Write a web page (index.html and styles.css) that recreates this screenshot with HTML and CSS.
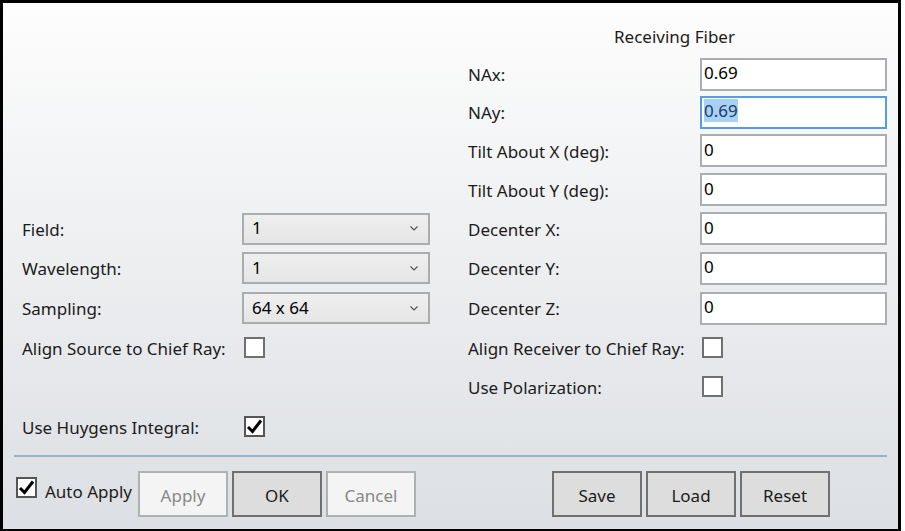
FILE: index.html
```html
<!DOCTYPE html>
<html>
<head>
<meta charset="utf-8">
<link rel="stylesheet" href="styles.css">
</head>
<body>
<div class="window">
  <div class="form">
    <!-- row 1 -->
    <div class="cell"></div><div class="cell"></div><div class="cell"></div>
    <div class="cell title span2">Receiving Fiber</div>
    <!-- row 2 -->
    <div class="cell"></div><div class="cell"></div><div class="cell"></div>
    <div class="cell label">NAx:</div>
    <div class="cell"><div class="textbox">0.69</div></div>
    <!-- row 3 -->
    <div class="cell"></div><div class="cell"></div><div class="cell"></div>
    <div class="cell label">NAy:</div>
    <div class="cell"><div class="textbox focused"><span class="sel">0.69</span></div></div>
    <!-- row 4 -->
    <div class="cell"></div><div class="cell"></div><div class="cell"></div>
    <div class="cell label">Tilt About X (deg):</div>
    <div class="cell"><div class="textbox">0</div></div>
    <!-- row 5 -->
    <div class="cell"></div><div class="cell"></div><div class="cell"></div>
    <div class="cell label">Tilt About Y (deg):</div>
    <div class="cell"><div class="textbox">0</div></div>
    <!-- row 6 -->
    <div class="cell label">Field:</div>
    <div class="cell"><div class="combo"><span>1</span><svg class="chev" width="8" height="5" viewBox="0 0 8 5"><polyline points="0.5,0.5 4,4 7.5,0.5" fill="none" stroke="#555" stroke-width="1.2"/></svg></div></div>
    <div class="cell"></div>
    <div class="cell label">Decenter X:</div>
    <div class="cell"><div class="textbox">0</div></div>
    <!-- row 7 -->
    <div class="cell label">Wavelength:</div>
    <div class="cell"><div class="combo"><span>1</span><svg class="chev" width="8" height="5" viewBox="0 0 8 5"><polyline points="0.5,0.5 4,4 7.5,0.5" fill="none" stroke="#555" stroke-width="1.2"/></svg></div></div>
    <div class="cell"></div>
    <div class="cell label">Decenter Y:</div>
    <div class="cell"><div class="textbox">0</div></div>
    <!-- row 8 -->
    <div class="cell label">Sampling:</div>
    <div class="cell"><div class="combo"><span>64 x 64</span><svg class="chev" width="8" height="5" viewBox="0 0 8 5"><polyline points="0.5,0.5 4,4 7.5,0.5" fill="none" stroke="#555" stroke-width="1.2"/></svg></div></div>
    <div class="cell"></div>
    <div class="cell label">Decenter Z:</div>
    <div class="cell"><div class="textbox">0</div></div>
    <!-- row 9 -->
    <div class="cell label">Align Source to Chief Ray:</div>
    <div class="cell"><div class="check"></div></div>
    <div class="cell"></div>
    <div class="cell label">Align Receiver to Chief Ray:</div>
    <div class="cell"><div class="check"></div></div>
    <!-- row 10 -->
    <div class="cell"></div><div class="cell"></div><div class="cell"></div>
    <div class="cell label">Use Polarization:</div>
    <div class="cell"><div class="check"></div></div>
    <!-- row 11 -->
    <div class="cell label">Use Huygens Integral:</div>
    <div class="cell"><div class="check checked"><svg width="17" height="17" viewBox="0 0 17 17"><polyline points="2,9 6.5,13.5 15,2.5" fill="none" stroke="#000" stroke-width="3"/></svg></div></div>
    <div class="cell"></div><div class="cell"></div><div class="cell"></div>
  </div>
  <div class="separator"></div>
  <div class="footer">
    <div class="group">
      <div class="auto">
        <div class="check checked"><svg width="17" height="17" viewBox="0 0 17 17"><polyline points="2,9 6.5,13.5 15,2.5" fill="none" stroke="#000" stroke-width="3"/></svg></div>
        <span class="auto-label">Auto Apply</span>
      </div>
      <div class="btn disabled">Apply</div>
      <div class="btn">OK</div>
      <div class="btn disabled">Cancel</div>
    </div>
    <div class="group right">
      <div class="btn">Save</div>
      <div class="btn">Load</div>
      <div class="btn">Reset</div>
    </div>
  </div>
</div>
</body>
</html>
```
FILE: styles.css
```css
html, body {
  margin: 0;
  padding: 0;
  background: #ffffff;
}
body {
  font-family: "Noto Sans", "Open Sans", sans-serif;
  font-size: 17px;
  color: #1b1b1b;
}
.window {
  width: 901px;
  height: 531px;
  box-sizing: border-box;
  border: 3px solid #000;
  border-bottom-width: 2px;
  background: linear-gradient(#fdfdfd, #dcdfe3);
  padding: 14px 11px 0 11px;
}
.form {
  display: grid;
  padding-left: 8px;
  grid-template-columns: 220px 188px 38px 232px 187px;
  grid-template-rows: 38px 38px 38px 39px 39px 39px 40px 40px 39px 39px 41px;
}
.cell {
  display: flex;
  align-items: center;
  min-width: 0;
}
.span2 {
  grid-column: span 2;
}
.title {
  justify-content: center;
  padding-right: 6px;
}
.label {
  white-space: nowrap;
  padding-top: 1px;
}
.textbox {
  box-sizing: border-box;
  width: 187px;
  height: 33px;
  border: 2px solid #abadb3;
  background: #fff;
  padding: 0 0 3px 2px;
  display: flex;
  align-items: center;
  color: #000;
}
.textbox.focused {
  border-color: #569de5;
}
.sel {
  background: #a8d1f8;
  color: #1d3c5e;
}
.combo {
  box-sizing: border-box;
  width: 188px;
  height: 32px;
  border: 2px solid #acacac;
  background: linear-gradient(#efefef, #e5e5e5);
  padding: 0 10px 2px 8px;
  display: flex;
  align-items: center;
  justify-content: space-between;
  color: #000;
}
.chev {
  margin-top: 2px;
}
.check {
  box-sizing: border-box;
  width: 21px;
  height: 21px;
  border: 2px solid #707070;
  background: #fff;
  margin-left: 2px;
  display: flex;
  align-items: center;
  justify-content: center;
}
.check.checked {
  border-color: #555;
}
.separator {
  height: 2px;
  background: #97b3c5;
  margin-top: 8px;
}
.footer {
  display: flex;
  justify-content: space-between;
  padding: 14px 57px 0 0;
}
.group {
  display: flex;
  gap: 4px;
}
.auto {
  display: flex;
  align-items: flex-start;
  width: 120px;
}
.auto .check {
  margin-top: 6px;
  margin-left: 2px;
}
.auto-label {
  margin-left: 8px;
  margin-top: 10px;
  line-height: 22px;
}
.btn {
  box-sizing: border-box;
  width: 90px;
  height: 46px;
  border: 2px solid #707070;
  background: #dddddd;
  display: flex;
  align-items: center;
  justify-content: center;
  padding-top: 2px;
  color: #1b1b1b;
}
.btn.disabled {
  border-color: #adb2b5;
  background: #f4f4f4;
  color: #888;
}
```
